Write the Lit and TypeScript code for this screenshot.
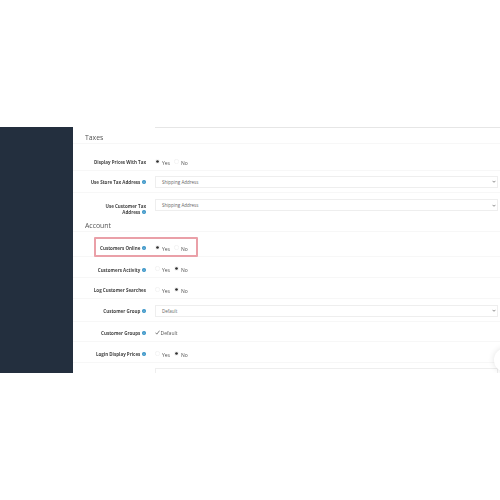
import { LitElement, html, css, svg } from "lit";
import { customElement } from "lit/decorators.js";

const info = html`<svg class="info" viewBox="0 0 10 10"><circle cx="5" cy="5" r="5" fill="#2f8fc4"/><rect x="4.2" y="4.2" width="1.6" height="3.6" fill="#cfe6f3"/><rect x="4.2" y="2.2" width="1.6" height="1.3" fill="#cfe6f3"/></svg>`;

const dot = (on: boolean) => html`<svg class="r" viewBox="0 0 10 10"><circle cx="5" cy="5" r="4.4" fill="#fff" stroke="#e8e8e8" stroke-width="1"/>${on ? svg`<circle cx="5" cy="5" r="2.7" fill="#2e2e2e"/>` : ""}</svg>`;

const radio = (yes: boolean) => html`<div class="radios">
  <span class="opt">${dot(yes)}<span class="t">Yes</span></span>
  <span class="opt">${dot(!yes)}<span class="t">No</span></span>
</div>`;

const select = (v: string) => html`<div class="select"><span>${v}</span><svg class="chev" viewBox="0 0 6 4"><path d="M.8 1 3 3.2 5.2 1" fill="none" stroke="#555" stroke-width="1"/></svg></div>`;

@customElement("app-root")
export class AppRoot extends LitElement {
  static styles = css`
    :host { display: block; width: 500px; height: 500px; background: #fff; font-family: "Open Sans", sans-serif; color: #444; overflow: hidden; }
    .frame { display: flex; height: 246px; margin-top: 127px; overflow: hidden; position: relative; }
    .side { width: 73px; flex: none; background: #232f3e; }
    .main { flex: 1; min-width: 0; position: relative; filter: blur(0.3px); }
    .topline { height: 1px; margin-left: 82px; background: #e6e6e6; }
    h3 { margin: 0; font-weight: 400; font-size: 6.9px; line-height: 10px; color: #555; padding-left: 12px; box-sizing: border-box; border-bottom: 1px solid #f7f7f7; }
    .h1 { height: 16px; padding-top: 5px; }
    .h2 { height: 15px; padding-top: 4px; }
    .row { display: grid; grid-template-columns: 73px 1fr; column-gap: 9px; align-items: center; padding-right: 2.5px; border-bottom: 1px solid #f7f7f7; box-sizing: border-box; position: relative; }
    .a { height: 27px; padding-top: 10px; }
    .b { height: 22px; }
    .c { height: 24px; border-bottom: 0; }
    .c .label { margin-top: 7px; }
    .d { height: 25px; padding-top: 8px; }
    .e { height: 21px; padding-top: 5px; }
    .f { height: 21px; padding-top: 4px; }
    .g { height: 23px; padding-top: 1px; }
    .h { height: 20px; padding-top: 3px; }
    .i { height: 30px; border-bottom: 0; align-items: start; padding-top: 5px; }
    .label { text-align: right; font-size: 4.5px; line-height: 6px; font-weight: 700; color: #444; padding-left: 16px; }
    .info { width: 4px; height: 4px; vertical-align: -0.3px; margin-left: 0.5px; }
    .radios { display: flex; gap: 4px; align-items: center; }
    .opt { display: flex; align-items: center; gap: 2px; }
    .r { width: 5px; height: 5px; flex: none; margin-top: -1.5px; }
    .t { font-size: 5px; line-height: 6px; color: #555; margin-top: 1px; }
    .select { height: 12px; border: 1px solid #eeeeee; box-sizing: border-box; display: flex; align-items: center; justify-content: space-between; padding: 0 1px 0 6px; font-size: 4.5px; color: #666; background: #fff; }
    .i .select { height: 30px; }
    .chev { width: 4px; height: 3px; }
    .check { display: flex; align-items: center; gap: 0.5px; font-size: 5px; color: #555; }
    .check svg { width: 5px; height: 5px; margin-top: -2px; }
    .mark { position: absolute; left: 21px; top: 5px; width: 104px; height: 19.5px; border: 2px solid #eaa0a8; border-radius: 1px; box-sizing: border-box; pointer-events: none; }
    .bubble { position: absolute; right: -18px; bottom: 1px; width: 24px; height: 24px; border-radius: 50%; background: #fff; box-shadow: 0 0 6px rgba(0,0,0,.12); }
  `;

  render() {
    return html`<div class="frame">
      <div class="side"></div>
      <div class="main">
        <div class="topline"></div>
        <h3 class="h1">Taxes</h3>
        <div class="row a"><div class="label">Display Prices With Tax</div>${radio(true)}</div>
        <div class="row b"><div class="label">Use Store Tax Address ${info}</div>${select("Shipping Address")}</div>
        <div class="row c"><div class="label">Use Customer Tax Address ${info}</div>${select("Shipping Address")}</div>
        <h3 class="h2">Account</h3>
        <div class="row d"><div class="label">Customers Online ${info}</div>${radio(true)}<div class="mark"></div></div>
        <div class="row e"><div class="label">Customers Activity ${info}</div>${radio(false)}</div>
        <div class="row f"><div class="label">Log Customer Searches</div>${radio(false)}</div>
        <div class="row g"><div class="label">Customer Group ${info}</div>${select("Default")}</div>
        <div class="row h"><div class="label">Customer Groups ${info}</div>
          <div class="check"><svg viewBox="0 0 6 6"><path d="M.6 3.2 2.2 5 5.4.8" fill="none" stroke="#444" stroke-width=".8"/></svg><span>Default</span></div></div>
        <div class="row f"><div class="label">Login Display Prices ${info}</div>${radio(false)}</div>
        <div class="row i"><div class="label"></div><div class="select"></div></div>
      </div>
      <div class="bubble"></div>
    </div>`;
  }
}
